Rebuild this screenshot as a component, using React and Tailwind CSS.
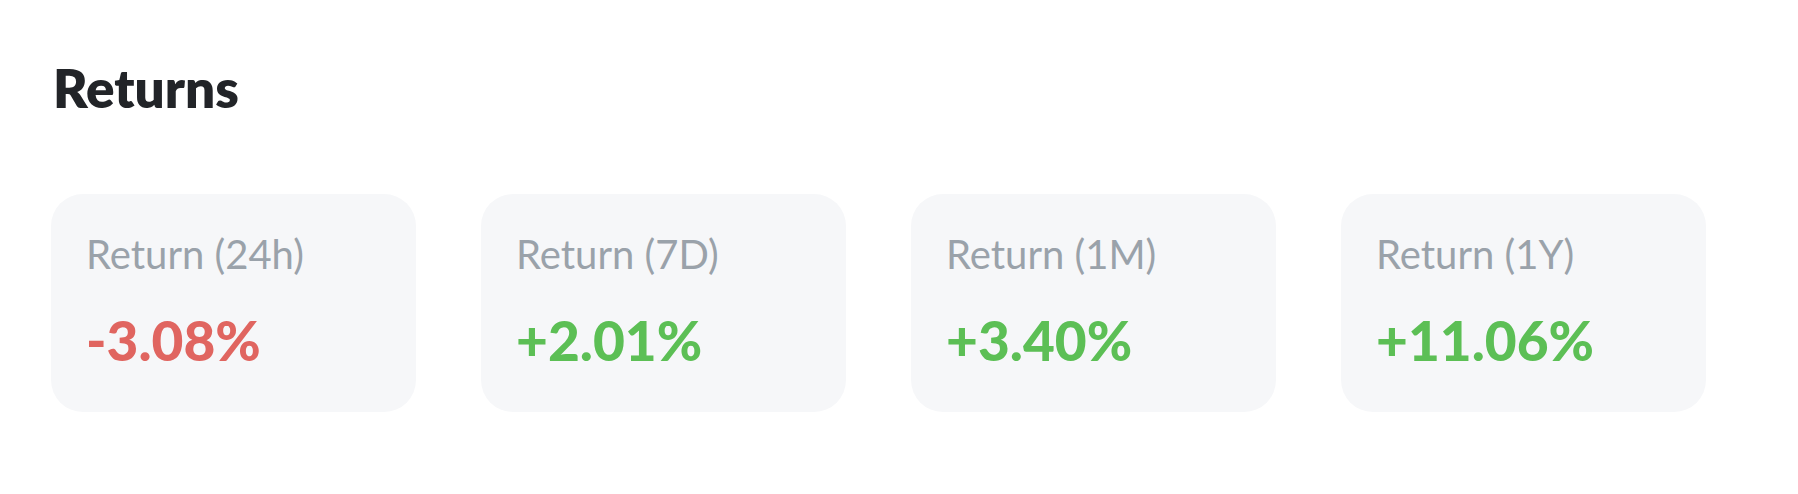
import React from "react";

const returns = [
  { label: "Return (24h)", value: "-3.08%", up: false },
  { label: "Return (7D)", value: "+2.01%", up: true },
  { label: "Return (1M)", value: "+3.40%", up: true },
  { label: "Return (1Y)", value: "+11.06%", up: true },
];

function ReturnCard({ label, value, up }) {
  return (
    <div className="w-[365px] h-[218px] rounded-[32px] bg-[#f6f7f9] pl-[35px] pt-[40px] flex flex-col">
      <div className="text-[40px] leading-[40px] text-[#9aa2aa] font-normal">{label}</div>
      <div
        className={
          "mt-[40px] text-[55px] leading-[52px] font-black " +
          (up ? "text-[#5cbf55]" : "text-[#e06560]")
        }
      >
        {value}
      </div>
    </div>
  );
}

export default function App() {
  return (
    <div
      className="w-[1798px] h-[494px] bg-white pl-[51px] pt-[60px]"
      style={{ fontFamily: 'Lato, "Liberation Sans", sans-serif' }}
    >
      <h1 className="text-[53px] leading-[56px] font-extrabold text-[#222428] pl-[2px]">Returns</h1>
      <div className="mt-[78px] flex gap-[65px]">
        {returns.map((r) => (
          <ReturnCard key={r.label} {...r} />
        ))}
      </div>
    </div>
  );
}
